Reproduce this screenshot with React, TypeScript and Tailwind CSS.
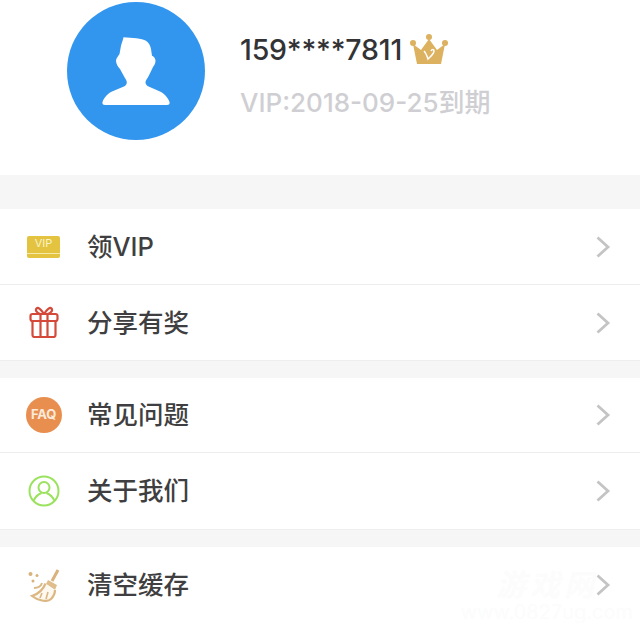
import React from "react";

const font = "font-['Inter','Noto_Sans_CJK_SC',sans-serif]";

const Chevron = () => (
  <svg width="16" height="24" viewBox="0 0 16 24" fill="none" className="shrink-0">
    <path d="M2.5 2.5 L13 12 L2.5 21.5" stroke="#c4c4c4" strokeWidth="2.8" />
  </svg>
);

const VipIcon = () => (
  <div className="flex h-[22px] w-[33px] flex-col rounded-[2px] bg-[#e3c33f]">
    <div className="flex h-[15px] items-center justify-center text-[11px] leading-none text-[#faf3c8]">VIP</div>
    <div className="mt-[2px] h-[1px] w-full bg-[#f5e9a8]" />
  </div>
);

const GiftIcon = () => (
  <svg width="30" height="32" viewBox="0 0 30 32" fill="none" stroke="#d4493a" strokeWidth="2.2" className="-translate-y-[1px]">
    <path d="M3.500 14 V29 A2 2 0 0 0 5.500 31 H24.500 A2 2 0 0 0 26.500 29 V14" />
    <rect x="1.500" y="8" width="27" height="7" rx="2" />
    <path d="M11.500 8 V31 M18.500 8 V31" />
    <path d="M15 8 C12 3 9 1 7.500 2.500 C6 4.500 8 7 11.500 8 M15 8 C18 3 21 1 22.500 2.500 C24 4.500 22 7 18.500 8" />
  </svg>
);

const FaqIcon = () => (
  <div className="flex h-9 w-9 items-center justify-center rounded-full bg-[#e88f4f] text-[13px] font-bold tracking-[-0.2px] text-[#fbeadb]">
    FAQ
  </div>
);

const AboutIcon = () => (
  <svg width="32" height="32" viewBox="0 0 32 32" fill="none" stroke="#9be25f" strokeWidth="2">
    <circle cx="16" cy="16" r="14.5" />
    <circle cx="16" cy="12.5" r="5.5" />
    <path d="M5.5 26 C7.5 21 11 19 13.5 18 M26.5 26 C24.500 21 21 19 18.500 18" />
  </svg>
);

const BroomIcon = () => (
  <svg width="34" height="34" viewBox="0 0 34 34" fill="none">
    <path d="M31 2 L25 13" stroke="#d9b27c" strokeWidth="3" />
    <path d="M21 12 L30 17 L28 22 L19 16 Z" fill="#e0bd8c" />
    <path d="M18.500 15.500 C16 22 11 26 5 28 C10 32 20 35 24 31 C27 28 28 25 28 22" stroke="#dcb783" strokeWidth="2.2" fill="#fdf8f0" />
    <path d="M15 25 L13 30 M21 24 L19 31" stroke="#dcb783" strokeWidth="1.6" />
    <circle cx="3.500" cy="6" r="2" fill="#d9b27c" />
    <circle cx="10" cy="7.500" r="1.500" fill="#d9b27c" />
    <circle cx="6" cy="13" r="1.500" fill="#d9b27c" />
    <path d="M7 20 C11 20 14 18 15 15" stroke="#dcb783" strokeWidth="2" />
  </svg>
);

const Row = ({ icon, label, className, children }: { icon: React.ReactNode; label: string; className: string; children?: React.ReactNode }) => (
  <div className={`relative flex items-center bg-white pr-[29px] ${className}`}>
    <div className="flex w-[87px] shrink-0 justify-center">{icon}</div>
    <span className="flex-1 text-[25.500px] font-medium leading-none text-[#3f3f41]">{label}</span>
    {children}
    <Chevron />
  </div>
);

const App = () => {
  return (
    <div className={`h-[623px] w-[640px] overflow-hidden bg-[#f6f6f6] ${font}`}>
      <div className="flex h-[175px] items-start bg-white pl-[67px] pt-[2px]">
        <div className="flex h-[138px] w-[138px] items-center justify-center rounded-full bg-[#3396ee]">
          <svg width="68" height="70" viewBox="0 0 68 70" fill="white">
            <path d="M21.500 1.300 C30 1.800 40 2.500 44 4.700 C47 6.500 48.500 10 49 13 L50 19.700 C52 20.500 53.500 22.500 53.500 24.700 C53.500 27.500 52 29.500 51 31 C49.500 34.500 47.500 38 46 41.300 C45 43 43.500 44.500 43.500 46.300 C43.500 48 44.500 49.500 46 50.300 L58 55.500 C62 57.500 66 61.500 67.500 66 C68 68 67 69 65 69 H3 C1 69 0 68 0.500 66 C2 61.500 6 57.500 10 55.500 L22.500 50.300 C24 49.500 24.800 48 24.800 46.300 C24.800 44.500 23.500 43 22.500 41.300 L18 33 C16 30.500 14 28 14 24.700 C14 22.500 16 20.500 17.500 18 L19 9.700 C20 6.500 21 4 21.500 1.300 Z" />
          </svg>
        </div>
        <div className="ml-[35px] flex flex-col pt-[29px]">
          <div className="flex items-center">
            <span className="text-[28.500px] font-medium leading-[38px] tracking-[-0.2px] text-[#333335]">159****7811</span>
            <svg width="38" height="32" viewBox="0 0 38 32" className="ml-[8px]" fill="#dcb15f">
              <circle cx="3" cy="9" r="3" />
              <circle cx="19" cy="3" r="3" />
              <circle cx="35" cy="9" r="3" />
              <path d="M3 10 L11 16 L19 5 L27 16 L35 10 L31 30 H7 Z" />
              <path d="M14 17 C16 19 17 22 18 25 C20 23 24 20 24 17 C24 15 22 15 21 17" fill="none" stroke="#fff" strokeWidth="1.500" />
            </svg>
          </div>
          <span className="mt-[19px] text-[26px] font-medium leading-[30px] text-[#cfcfd3]">VIP:2018-09-25到期</span>
        </div>
      </div>

      <div className="mt-[34px]">
        <Row icon={<VipIcon />} label="领VIP" className="h-[76px] border-b border-[#eeeeee]" />
        <Row icon={<GiftIcon />} label="分享有奖" className="h-[76px] border-b border-[#eeeeee]" />
      </div>
      <div className="mt-[17px]">
        <Row icon={<FaqIcon />} label="常见问题" className="h-[75px] border-b border-[#eeeeee]" />
        <Row icon={<AboutIcon />} label="关于我们" className="h-[77px] border-b border-[#eeeeee]" />
      </div>
      <div className="mt-[17px]">
        <Row icon={<BroomIcon />} label="清空缓存" className="h-[76px]">
          <div className="absolute right-[7px] top-[21px] flex flex-col items-center text-[#fcfcfc]">
            <span className="text-[30px] font-bold italic leading-[34px] tracking-[4px]">游戏网</span>
            <span className="text-[20px] leading-[20px]">www.0827ug.com</span>
          </div>
        </Row>
      </div>
    </div>
  );
};

export default App;
